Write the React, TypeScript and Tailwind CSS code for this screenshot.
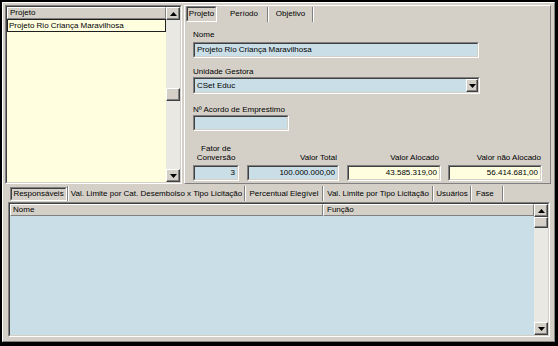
import React from 'react';

const GRAY = 'bg-[#d4d0c8]';
const BLUE = 'bg-[#c9dee7]';
const YELLOW = 'bg-[#ffffe0]';

type BoxProps = { className?: string; inner?: string; children?: React.ReactNode };

// classic 2px sunken field
const Sunken: React.FC<BoxProps> = ({ className = '', inner = '', children }) => (
  <div className={`border border-t-[#808080] border-l-[#808080] border-r-white border-b-white ${className}`}>
    <div className={`h-full w-full border border-t-[#404040] border-l-[#404040] border-r-[#d4d0c8] border-b-[#d4d0c8] ${inner}`}>
      {children}
    </div>
  </div>
);

const Arrow: React.FC<{ up?: boolean }> = ({ up }) => (
  <svg width="7" height="4" viewBox="0 0 7 4">
    <path d={up ? 'M3.5 0L7 4H0Z' : 'M0 0H7L3.5 4Z'} fill="#000" />
  </svg>
);

const Btn: React.FC<{ className?: string; children?: React.ReactNode }> = ({ className = '', children }) => (
  <div
    className={`${GRAY} flex items-center justify-center border border-t-white border-l-white border-r-[#404040] border-b-[#404040] shadow-[inset_-1px_-1px_0_#808080] ${className}`}
  >
    {children}
  </div>
);

const Sep = () => (
  <div className="flex h-[15px] w-[2px] shrink-0">
    <div className="w-px bg-[#808080]" />
    <div className="w-px bg-white" />
  </div>
);

const Field: React.FC<{ w: string; bg: string; right?: boolean; children?: React.ReactNode }> = ({ w, bg, right, children }) => (
  <Sunken className={`${w} h-[16px]`} inner={`${bg} flex items-center px-[2px] ${right ? 'justify-end' : ''}`}>
    <span className="leading-[10px]">{children}</span>
  </Sunken>
);

const Track: React.FC<{ className?: string; children?: React.ReactNode }> = ({ className = '', children }) => (
  <div className={`flex flex-col bg-[#eae8e3] ${className}`}>{children}</div>
);

const BottomTab: React.FC<{ w: string; label: string; pl?: string }> = ({ w, label, pl }) => (
  <>
    <div className={`${w} flex h-[15px] items-center ${pl ? pl : 'justify-center'}`}>{label}</div>
    <Sep />
  </>
);

export default function App() {
  return (
    <div className="h-[346px] w-[558px] bg-black pb-[4px] pl-[2px] pr-[3px] pt-[2px] font-['Liberation_Sans',Arial,sans-serif] text-[8px] leading-[10px] text-black">
      <div className={`${GRAY} flex h-full w-full flex-col border border-t-white border-l-white border-r-[#808080] border-b-[#808080]`}>
        {/* top section */}
        <div className="ml-[2px] mt-[2px] flex h-[179px]">
          {/* project list */}
          <Sunken className="h-full w-[177px]" inner="flex">
            <div className={`${YELLOW} flex w-[159px] flex-col`}>
              <div className={`${GRAY} flex h-[12px] items-center border border-t-white border-l-white border-r-[#808080] border-b-[#808080] pl-[2px]`}>
                Projeto
              </div>
              <div className="flex h-[13px] items-center border border-[#202020] pl-[1px]">
                Projeto Rio Criança Maravilhosa
              </div>
            </div>
            <Track className="w-[14px]">
              <Btn className="h-[13px]">
                <Arrow up />
              </Btn>
              <div className="h-[68px]" />
              <Btn className="h-[13px]" />
              <div className="flex-1" />
              <Btn className="h-[13px]">
                <Arrow />
              </Btn>
            </Track>
          </Sunken>

          {/* detail panel */}
          <div className="ml-[2px] flex h-full w-[367px] flex-col border border-t-white border-l-white border-r-[#808080] border-b-[#808080]">
            <div className="flex h-[16px] items-center pl-[1px]">
              <Sunken className="h-[16px] w-[31px]" inner="flex items-center justify-center">
                Projeto
              </Sunken>
              <div className="ml-[4px] flex h-[15px] w-[46px] items-center justify-center">Período</div>
              <Sep />
              <div className="flex h-[15px] w-[43px] items-center justify-center">Objetivo</div>
              <Sep />
            </div>

            <div className="ml-[8px] flex flex-col">
              <div className="mt-[8px] h-[10px]">Nome</div>
              <div className="mt-[2px]">
                <Field w="w-[286px]" bg={BLUE}>
                  Projeto Rio Criança Maravilhosa
                </Field>
              </div>

              <div className="mt-[9px] h-[10px]">Unidade Gestora</div>
              <Sunken className="h-[17px] w-[287px]" inner={`${BLUE} flex items-center pl-[2px]`}>
                <span className="flex-1">CSet Educ</span>
                <Btn className="h-[13px] w-[12px]">
                  <Arrow />
                </Btn>
              </Sunken>

              <div className="mt-[11px] h-[10px]">Nº Acordo de Emprestimo</div>
              <Field w="w-[96px]" bg={BLUE} />

              <div className="mt-[13px] flex items-end">
                <div className="flex w-[46px] flex-col">
                  <div className="mb-[3px] text-center leading-[9px]">
                    Fator de
                    <br />
                    Conversão
                  </div>
                  <Field w="w-[46px]" bg={BLUE} right>
                    3
                  </Field>
                </div>
                <div className="ml-[8px] flex w-[92px] flex-col">
                  <div className="mb-[3px] pr-[2px] text-right leading-[9px]">Valor Total</div>
                  <Field w="w-[92px]" bg={BLUE} right>
                    100.000.000,00
                  </Field>
                </div>
                <div className="ml-[8px] flex w-[94px] flex-col">
                  <div className="mb-[3px] pr-[2px] text-right leading-[9px]">Valor Alocado</div>
                  <Field w="w-[94px]" bg={YELLOW} right>
                    43.585.319,00
                  </Field>
                </div>
                <div className="ml-[7px] flex w-[94px] flex-col">
                  <div className="mb-[3px] pr-[1px] text-right leading-[9px]">Valor não Alocado</div>
                  <Field w="w-[94px]" bg={YELLOW} right>
                    56.414.681,00
                  </Field>
                </div>
              </div>
            </div>
          </div>
        </div>

        {/* bottom tabs */}
        <div className="ml-[7px] mt-[2px] flex h-[15px] items-center">
          <Sunken className="h-[14px] w-[57px]" inner="flex items-center justify-center">
            Responsáveis
          </Sunken>
          <Sep />
          <BottomTab w="w-[175px]" label="Val. Limite por Cat. Desembolso x Tipo Licitação" />
          <BottomTab w="w-[76px]" label="Percentual Elegível" />
          <BottomTab w="w-[108px]" label="Val. Limite por Tipo Licitação" />
          <BottomTab w="w-[36px]" label="Usuários" />
          <BottomTab w="w-[30px]" label="Fase" pl="pl-[4px]" />
        </div>

        {/* responsaveis grid */}
        <Sunken className="ml-[5px] mt-[1px] h-[135px] w-[542px]" inner="flex">
          <div className={`${BLUE} flex flex-1 flex-col`}>
            <div className="flex h-[12px]">
              <div className={`${GRAY} flex w-[313px] items-center border border-t-white border-l-white border-r-[#808080] border-b-[#808080] pl-[2px]`}>
                Nome
              </div>
              <div className={`${GRAY} flex flex-1 items-center border border-t-white border-l-white border-r-[#808080] border-b-[#808080] pl-[3px]`}>
                Função
              </div>
            </div>
          </div>
          <Track className="w-[14px]">
            <Btn className="h-[13px]">
              <Arrow up />
            </Btn>
            <Btn className="h-[11px]" />
            <div className="flex-1" />
            <Btn className="h-[13px]">
              <Arrow />
            </Btn>
          </Track>
        </Sunken>
      </div>
    </div>
  );
}
